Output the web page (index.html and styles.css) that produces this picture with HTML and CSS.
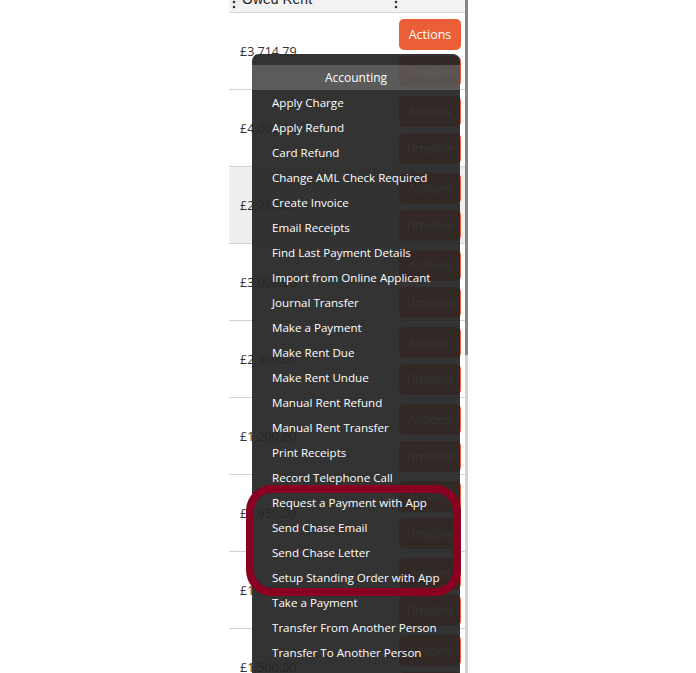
FILE: index.html
```html
<!DOCTYPE html>
<html>
<head>
<meta charset="utf-8">
<link rel="stylesheet" href="styles.css">
</head>
<body>
<div class="page">
  <div class="left-space"></div>
  <div class="table">
    <div class="thead">
      <div class="th th-rent">
        <svg class="dots" width="4" height="10" viewBox="0 0 4 10"><circle cx="2" cy="2" r="1.3"/><circle cx="2" cy="7" r="1.3"/></svg>
        <span class="th-label">Owed Rent</span>
      </div>
      <div class="th th-act">
        <svg class="dots" width="4" height="10" viewBox="0 0 4 10"><circle cx="2" cy="2" r="1.3"/><circle cx="2" cy="7" r="1.3"/></svg>
      </div>
    </div>
    <div class="row"><div class="amount">£3,714.79</div><div class="acts"><button class="btn">Actions</button><button class="btn">Timeline</button></div></div>
    <div class="row"><div class="amount">£4,000.00</div><div class="acts"><button class="btn">Actions</button><button class="btn">Timeline</button></div></div>
    <div class="row row-hl"><div class="amount">£2,250.00</div><div class="acts"><button class="btn">Actions</button><button class="btn">Timeline</button></div></div>
    <div class="row"><div class="amount">£3,000.00</div><div class="acts"><button class="btn">Actions</button><button class="btn">Timeline</button></div></div>
    <div class="row"><div class="amount">£2,300.00</div><div class="acts"><button class="btn">Actions</button><button class="btn">Timeline</button></div></div>
    <div class="row"><div class="amount">£1,200.00</div><div class="acts"><button class="btn">Actions</button><button class="btn">Timeline</button></div></div>
    <div class="row"><div class="amount">£1,950.00</div><div class="acts"><button class="btn">Actions</button><button class="btn">Timeline</button></div></div>
    <div class="row"><div class="amount">£1,750.00</div><div class="acts"><button class="btn">Actions</button><button class="btn">Timeline</button></div></div>
    <div class="row"><div class="amount">£1,500.00</div><div class="acts"><button class="btn">Actions</button><button class="btn">Timeline</button></div></div>

    <div class="menu">
      <div class="menu-head">Accounting</div>
      <ul class="menu-list">
        <li>Apply Charge</li>
        <li>Apply Refund</li>
        <li>Card Refund</li>
        <li>Change AML Check Required</li>
        <li>Create Invoice</li>
        <li>Email Receipts</li>
        <li>Find Last Payment Details</li>
        <li>Import from Online Applicant</li>
        <li>Journal Transfer</li>
        <li>Make a Payment</li>
        <li>Make Rent Due</li>
        <li>Make Rent Undue</li>
        <li>Manual Rent Refund</li>
        <li>Manual Rent Transfer</li>
        <li>Print Receipts</li>
        <li>Record Telephone Call</li>
        <li>Request a Payment with App</li>
        <li>Send Chase Email</li>
        <li>Send Chase Letter</li>
        <li>Setup Standing Order with App</li>
        <li>Take a Payment</li>
        <li>Transfer From Another Person</li>
        <li>Transfer To Another Person</li>
      </ul>
    </div>
    <div class="highlight"></div>
  </div>
  <div class="scrollbar"><div class="thumb"></div></div>
</div>
</body>
</html>
```
FILE: styles.css
```css
html, body {
  margin: 0;
  padding: 0;
  height: 673px;
  overflow: hidden;
  background: #ffffff;
}
.page {
  display: flex;
  height: 673px;
  font-family: "Open Sans", "Noto Sans", sans-serif;
}
.left-space {
  width: 229px;
  flex: none;
}
.table {
  width: 236px;
  flex: none;
  position: relative;
  overflow: hidden;
}
.thead {
  display: flex;
  height: 12px;
  background: #f2f2f2;
  border-bottom: 1px solid #d4d4d4;
  overflow: hidden;
}
.th {
  display: flex;
  align-items: flex-start;
}
.th-rent {
  width: 162px;
  padding-left: 3px;
  gap: 6px;
}
.th-act {
  flex: 1;
}
.dots {
  fill: #2b3645;
  flex: none;
}
.th-label {
  font-family: "Liberation Sans", Arial, sans-serif;
  font-size: 14px;
  line-height: 16px;
  color: #222;
  margin-top: -9px;
}
.row {
  display: flex;
  height: 76px;
  border-bottom: 1px solid #d2d2d2;
  background: #fff;
}
.row-hl {
  background: #efefef;
}
.amount {
  width: 154px;
  padding-left: 11px;
  display: flex;
  align-items: center;
  font-size: 12.5px;
  color: #333;
  padding-top: 1px;
}
.acts {
  flex: 1;
  display: flex;
  flex-direction: column;
  align-items: flex-end;
  gap: 6px;
  padding-top: 6px;
  padding-right: 4px;
}
.btn {
  width: 62px;
  height: 31px;
  border: none;
  border-radius: 5px;
  background: #eb5e37;
  color: #fff;
  font-family: "Open Sans", "Noto Sans", sans-serif;
  font-size: 12.5px;
  padding: 0;
}
.menu {
  position: absolute;
  left: 23px;
  top: 54px;
  width: 208px;
  height: 640px;
  background: rgba(38, 38, 38, 0.94);
  border-radius: 7px 7px 0 0;
  padding-top: 11px;
  box-sizing: border-box;
  color: #fff;
}
.menu-head {
  height: 25px;
  line-height: 25px;
  text-align: center;
  font-size: 12px;
  background: rgba(255, 255, 255, 0.2);
}
.menu-list {
  list-style: none;
  margin: 0;
  padding: 0 0 0 20px;
}
.menu-list li {
  height: 25px;
  line-height: 25px;
  font-size: 11.6px;
  white-space: nowrap;
}
.highlight {
  position: absolute;
  left: 17px;
  top: 485px;
  width: 215px;
  height: 111px;
  box-sizing: border-box;
  border: 8px solid #8a0020;
  border-radius: 26px;
}
.scrollbar {
  width: 3px;
  flex: none;
  background: #d2d2d2;
  height: 673px;
}
.thumb {
  height: 355px;
  background: #858585;
}
```
